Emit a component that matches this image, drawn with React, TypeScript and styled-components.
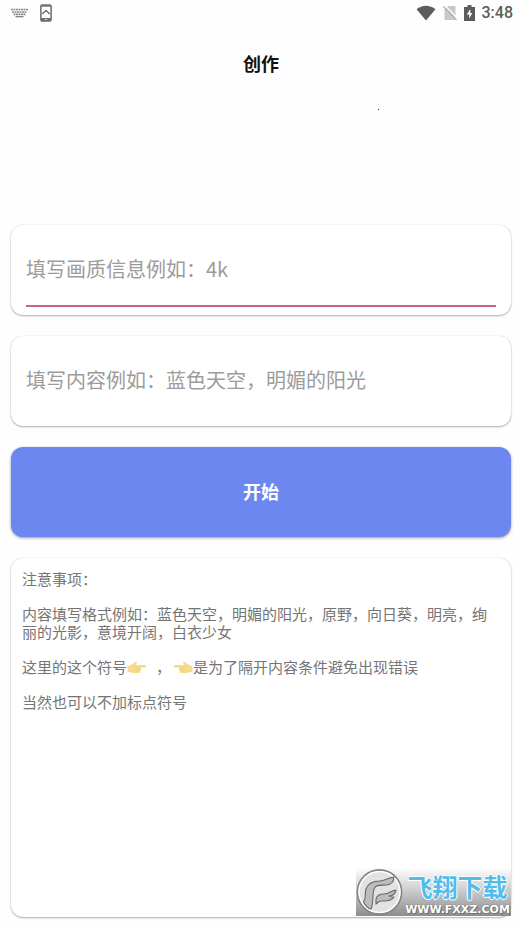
import React from "react";
import styled, { createGlobalStyle } from "styled-components";

const sans = `"Noto Sans CJK SC", "Noto Sans", sans-serif`;

const GlobalStyle = createGlobalStyle`
  *, *::before, *::after { box-sizing: border-box; }
  body { margin: 0; background: #fefefe; font-family: ${sans}; }
`;

const Screen = styled.div`
  position: relative;
  display: flex;
  flex-direction: column;
  min-height: 100vh;
  background: #fefefe;
`;

const StatusBar = styled.div`
  display: flex;
  align-items: center;
  justify-content: space-between;
  height: 26px;
  padding: 0 9px 0 11px;
`;

const StatusGroup = styled.div<{ $gap: number }>`
  display: flex;
  align-items: center;
  gap: ${(p) => p.$gap}px;
`;

const Clock = styled.time`
  font: 500 16px/20px Roboto, sans-serif;
  color: #5c5c5c;
`;

const TitleBar = styled.header`
  display: flex;
  align-items: center;
  justify-content: center;
  height: 74px;
`;

const Title = styled.h1`
  margin: 0;
  font-size: 18px;
  line-height: 26px;
  font-weight: 700;
  color: #111;
`;

const Preview = styled.div`
  position: relative;
  height: 125px;
`;

const Speck = styled.span`
  position: absolute;
  top: 9px;
  left: 72.4%;
  width: 1px;
  height: 1px;
  background: #333;
`;

const Form = styled.form`
  display: flex;
  flex: 1;
  flex-direction: column;
  gap: 21px;
  padding: 0 11px 11px;
`;

const cardShadow = `0 1px 2px rgba(0, 0, 0, 0.3), 0 0 1px rgba(0, 0, 0, 0.2)`;

const Field = styled.label`
  display: flex;
  height: 90px;
  padding: 7px 15px 8px;
  border-radius: 12px;
  background: #fff;
  box-shadow: ${cardShadow};
`;

const TextBox = styled.input<{ $active?: boolean }>`
  flex: 1;
  min-width: 0;
  padding: 0;
  border: 0;
  border-bottom: 2px solid ${(p) => (p.$active ? "#cf6088" : "transparent")};
  border-radius: 0;
  outline: 0;
  background: transparent;
  font-family: ${sans};
  font-size: 20px;
  color: #333;
  &::placeholder { color: #9c9c9c; opacity: 1; }
`;

const StartButton = styled.button`
  height: 90px;
  padding: 0 0 2px;
  border: 0;
  border-radius: 12px;
  background: #6c87ef;
  box-shadow: 0 1px 3px rgba(0, 0, 0, 0.4);
  font-family: ${sans};
  font-size: 18px;
  font-weight: 700;
  color: #fff;
`;

const Notes = styled.section`
  display: flex;
  flex: 1;
  flex-direction: column;
  gap: 17px;
  padding: 12px 11px;
  border-radius: 12px;
  background: #fff;
  box-shadow: ${cardShadow};
`;

const Note = styled.p`
  margin: 0;
  font-size: 15px;
  line-height: 18px;
  color: #757575;
`;

const HandIcon = styled.svg<{ $flip?: boolean }>`
  width: 20px;
  height: 14px;
  vertical-align: -2px;
  transform: ${(p) => (p.$flip ? "scaleX(-1)" : "none")};
`;

const Separator = styled.span`
  margin: 0 2px 0 9px;
`;

const Watermark = styled.div`
  position: absolute;
  right: 11px;
  bottom: 12px;
  display: flex;
  align-items: center;
  width: 155px;
  height: 48px;
  background: linear-gradient(#fdfdfd, #d4d4d4 40%, #8d8d8d);
`;

const WatermarkText = styled.div`
  display: flex;
  flex: 1;
  flex-direction: column;
  align-items: center;
`;

const SiteName = styled.span`
  font-size: 25px;
  line-height: 36px;
  font-weight: 700;
  color: #53bce8;
  white-space: nowrap;
  text-shadow: 1px 0 #fff, -1px 0 #fff, 0 1px #fff, 0 -1px #fff;
`;

const SiteUrl = styled.span`
  font: 700 11px/12px "DejaVu Sans", sans-serif;
  color: #fff;
  white-space: nowrap;
  text-shadow: 0 0 1px #555, 1px 1px #777;
`;

const Hand = ({ flip, label }: { flip?: boolean; label: string }) => (
  <HandIcon $flip={flip} viewBox="0 0 20 14" role="img" aria-label={label}>
    <path
      d="M.5 5.500 5 3.600 8.500.8c1.200-.5 1.900.7 1 1.700L8.300 4.100h9.400c1.900 0 1.900 2.400 0 2.500h-4.200c1 .4.900 1.700 0 2 .6.500.4 1.600-.5 1.800.2.800-.3 1.500-1.200 1.500H6.500C4.500 12 3 11 .5 10.800Z"
      fill="#f5dc8b"
    />
    <path d="M9.500 6.700h4M9.500 8.700h3.700M9.500 10.500h3" stroke="#e9c976" strokeWidth=".5" />
  </HandIcon>
);

const KeyboardIcon = () => (
  <svg width="17" height="10" viewBox="0 0 17 10" aria-hidden="true">
    <g stroke="#858585" strokeWidth="1.700" strokeDasharray="1.900 .6">
      <path d="M0 1.500h17M1 4h15" />
      <path d="M2.500 6.300h12" />
    </g>
    <path d="M4.500 8.700h8" stroke="#777" strokeWidth="1.200" />
  </svg>
);

const PhoneIcon = () => (
  <svg width="12" height="18" viewBox="0 0 12 18" aria-hidden="true">
    <rect x=".9" y=".9" width="10.200" height="16.200" rx="1.400" fill="#fff" stroke="#6c6c6c" strokeWidth="1.500" />
    <path d="M1 14h10v3H1z" fill="#6c6c6c" />
    <path d="M1 2h10" stroke="#6c6c6c" strokeWidth="1.400" />
    <path d="m2.300 10 3.700-3.500L9.700 10" fill="none" stroke="#6c6c6c" strokeWidth="1.400" />
    <path d="M4.800 15.500h2.400" stroke="#ddd" />
  </svg>
);

const WifiIcon = () => (
  <svg width="20" height="16" viewBox="0 0 20 16" aria-hidden="true">
    <path d="M.5 4.200C6-.5 14-.5 19.500 4.200L10 15.500Z" fill="#5c5c5c" />
  </svg>
);

const NoSimIcon = () => (
  <svg width="14" height="16" viewBox="0 0 14 16" aria-hidden="true">
    <path d="M5 1h7.500v14H1.500V4.500Z" fill="#c9c9c9" />
    <path d="m1.500 0 13.500 14" stroke="#fefefe" strokeWidth="1.500" />
    <path d="m.5 1.500 13 13.500" stroke="#b4b4b4" strokeWidth="1.400" />
  </svg>
);

const BatteryIcon = () => (
  <svg width="11" height="17" viewBox="0 0 11 17" aria-hidden="true">
    <path d="M3.500 0h4v2H11v14H0V2h3.500Z" fill="#5c5c5c" />
    <path d="M6.300 4 2.800 9.500h2.400v4L8.300 8H6.300Z" fill="#fff" />
  </svg>
);

const BrandIcon = () => (
  <svg width="48" height="48" viewBox="0 0 48 48" aria-hidden="true">
    <circle cx="23.500" cy="24" r="22" fill="#e2e2e2" stroke="#858585" strokeWidth="1.800" />
    <circle cx="23.500" cy="24" r="20.500" fill="none" stroke="#fff" strokeWidth="1.400" />
    <g fill="#bcbcbc" stroke="#686868" strokeWidth="1.100" strokeLinejoin="round">
      <path d="M7.500 34c3-4 1-8 2.500-13 2-6 7-8 14-8 5 0 7-3 14-4-.5 5-3 8-8 8-5 .5-10-1-12 4-2 6 0 13-3 20-4-1-6-4-7.500-7Z" />
      <path d="M20 31c1-4 4-5 8-5 5 0 6-3 12-4-1 4-3 6-7 6 2 1 3 1 5 1-3 5-10 4-13 4-2 0-3 1-5 3Z" />
    </g>
  </svg>
);

export default function App() {
  return (
    <>
      <GlobalStyle />
      <Screen>
        <StatusBar>
          <StatusGroup $gap={12}>
            <KeyboardIcon />
            <PhoneIcon />
          </StatusGroup>
          <StatusGroup $gap={7}>
            <WifiIcon />
            <NoSimIcon />
            <BatteryIcon />
            <Clock>3:48</Clock>
          </StatusGroup>
        </StatusBar>
        <TitleBar>
          <Title>创作</Title>
        </TitleBar>
        <Preview>
          <Speck />
        </Preview>
        <Form onSubmit={(e) => e.preventDefault()}>
          <Field>
            <TextBox $active aria-label="画质信息" placeholder="填写画质信息例如：4k" />
          </Field>
          <Field>
            <TextBox aria-label="内容" placeholder="填写内容例如：蓝色天空，明媚的阳光" />
          </Field>
          <StartButton type="submit">开始</StartButton>
          <Notes>
            <Note>注意事项：</Note>
            <Note>内容填写格式例如：蓝色天空，明媚的阳光，原野，向日葵，明亮，绚丽的光影，意境开阔，白衣少女</Note>
            <Note>
              这里的这个符号
              <Hand label="右" />
              <Separator>，</Separator>
              <Hand flip label="左" />
              是为了隔开内容条件避免出现错误
            </Note>
            <Note>当然也可以不加标点符号</Note>
          </Notes>
        </Form>
        <Watermark>
          <BrandIcon />
          <WatermarkText>
            <SiteName>飞翔下载</SiteName>
            <SiteUrl>WWW.FXXZ.COM</SiteUrl>
          </WatermarkText>
        </Watermark>
      </Screen>
    </>
  );
}
